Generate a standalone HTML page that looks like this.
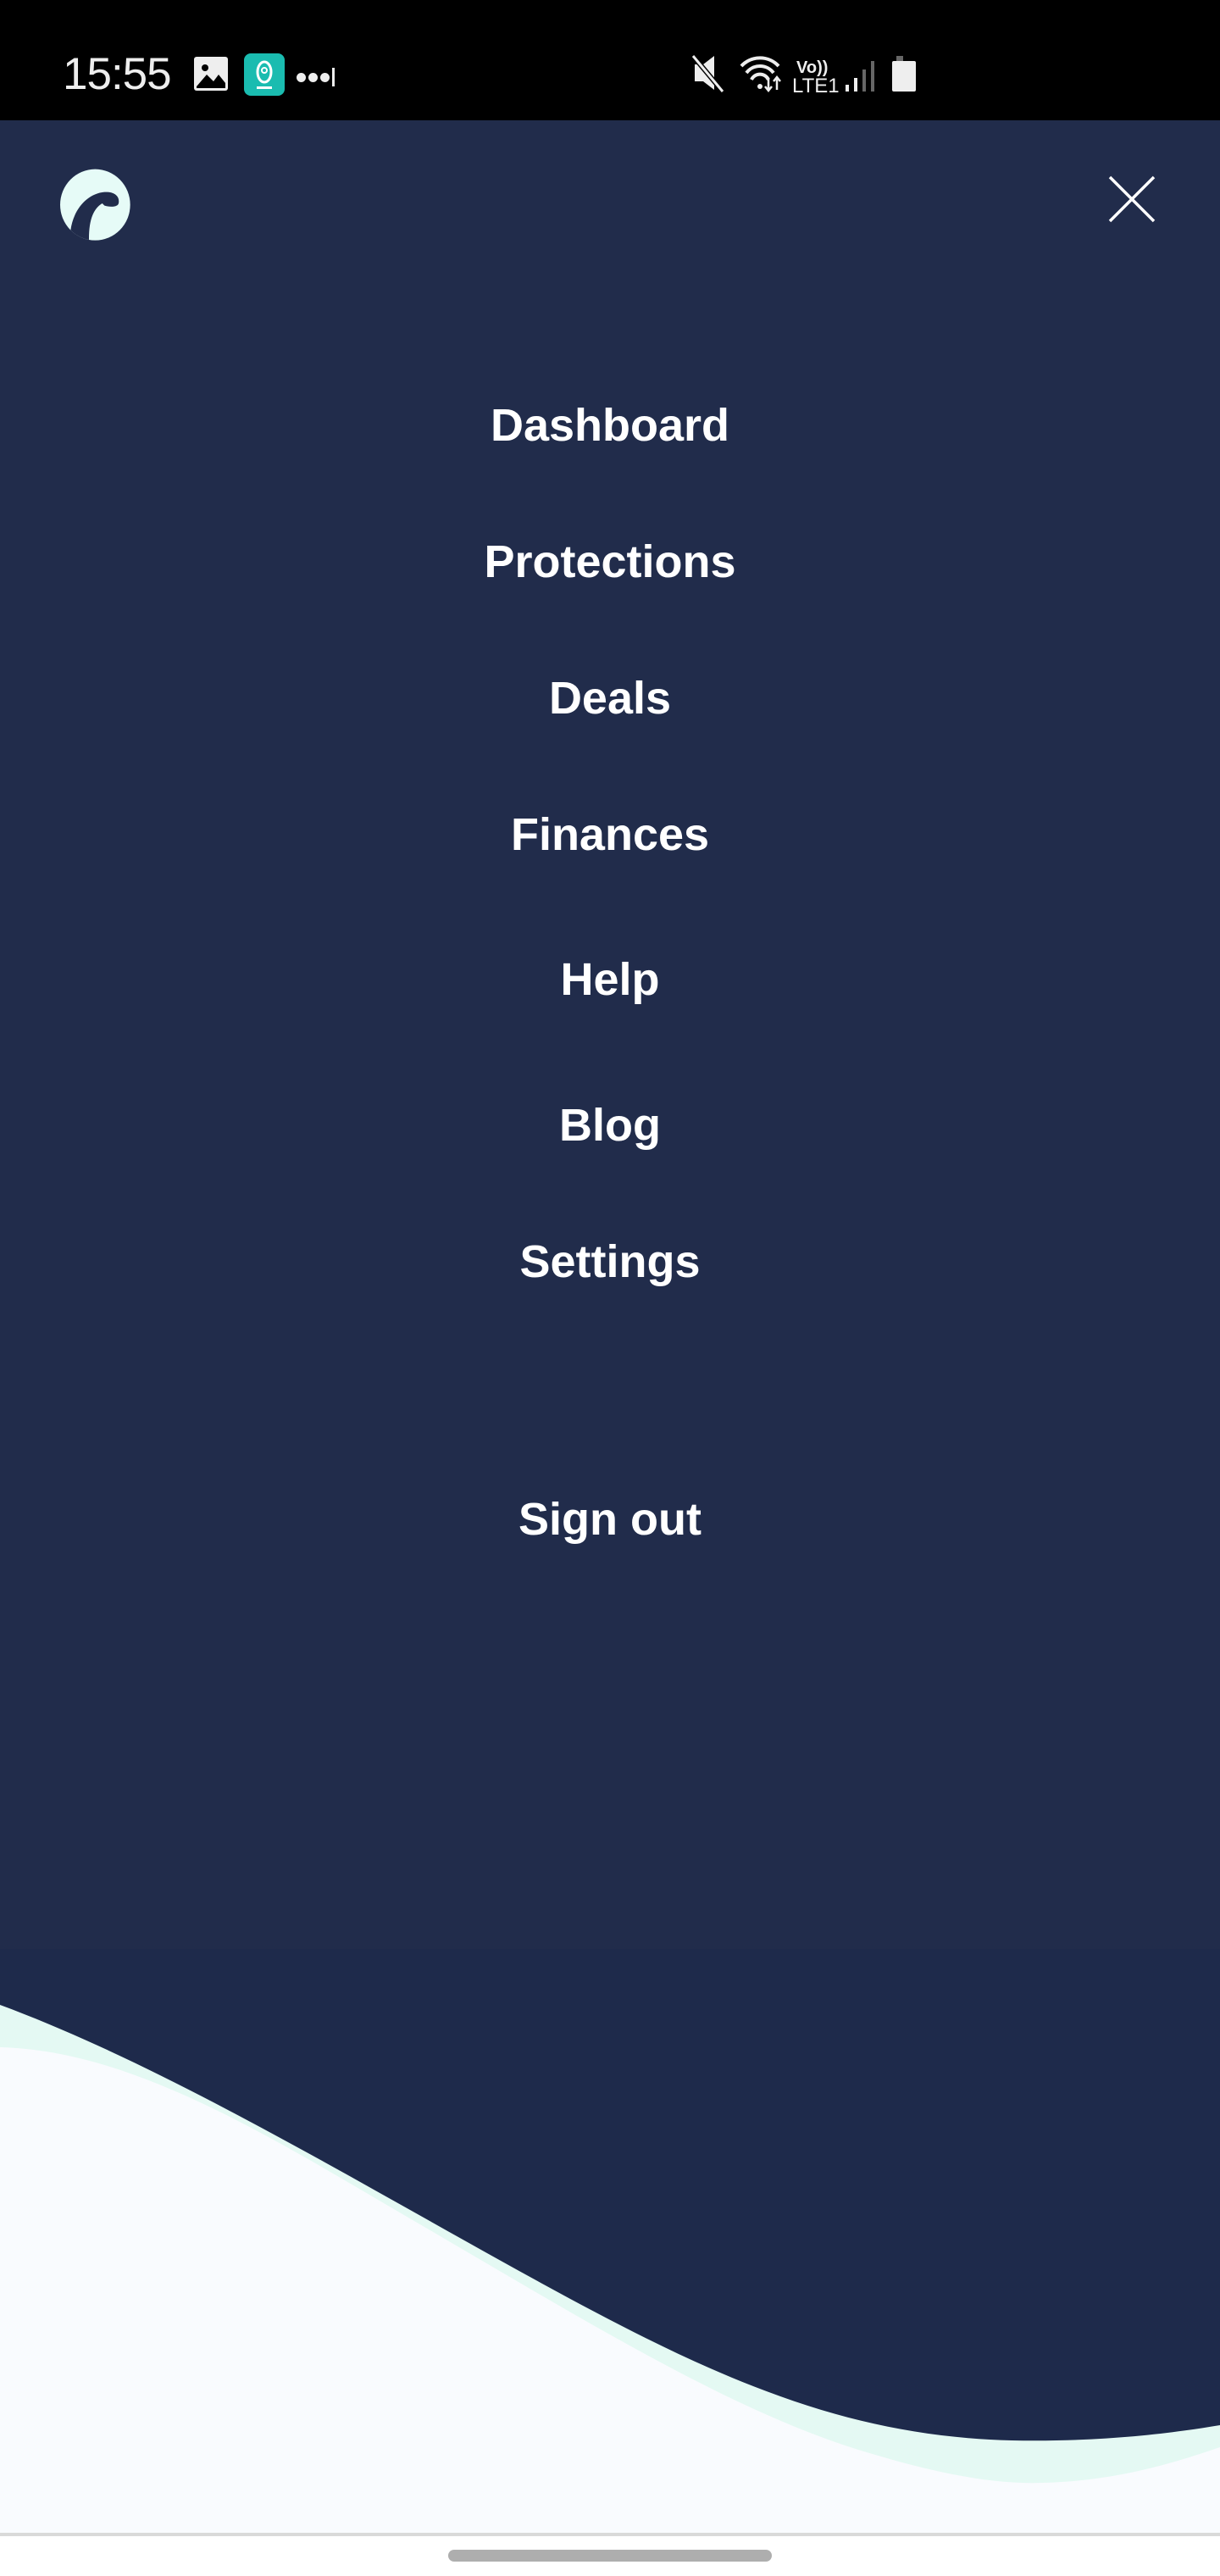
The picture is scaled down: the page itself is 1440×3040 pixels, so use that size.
<!DOCTYPE html>
<html><head><meta charset="utf-8"><style>
*{margin:0;padding:0;box-sizing:border-box}
body{width:1440px;height:3040px;overflow:hidden;background:#f9fbfe;font-family:"Liberation Sans",sans-serif;position:relative}
.sb{position:absolute;left:0;top:0;width:1440px;height:142px;background:#000}
.nav{position:absolute;left:0;top:142px;width:1440px;height:2850px;background:linear-gradient(#212c4b 0,#212c4b 2150px,#1e2a4b 2250px)}
.item{position:absolute;left:0;width:1440px;text-align:center;color:#fff;font-weight:bold;font-size:54px;line-height:60px}
</style></head><body>
<div class="sb">
<div style="position:absolute;left:74px;top:58px;color:#eee;font-size:53px;line-height:60px;letter-spacing:-1px">15:55</div>
<svg style="position:absolute;left:228px;top:66px" width="42" height="42" viewBox="0 0 42 42"><rect x="1" y="1" width="40" height="40" rx="3" fill="#eee"/><circle cx="14" cy="14" r="4" fill="#000"/><path d="M4 36 L16 22 L24 30 L30 22 L38 32 L38 38 L4 38Z" fill="#000"/></svg>
<svg style="position:absolute;left:288px;top:63px" width="48" height="50" viewBox="0 0 48 50"><rect width="48" height="50" rx="8" fill="#1abcb0"/><ellipse cx="24" cy="22" rx="8" ry="12" fill="none" stroke="#fff" stroke-width="3"/><circle cx="24" cy="20" r="3" fill="none" stroke="#fff" stroke-width="2"/><rect x="15" y="39" width="18" height="3" fill="#fff"/></svg>
<div style="position:absolute;left:350px;top:80px"><span style="display:inline-block;width:11px;height:11px;border-radius:50%;background:#eee;margin-right:3px"></span><span style="display:inline-block;width:11px;height:11px;border-radius:50%;background:#eee;margin-right:3px"></span><span style="display:inline-block;width:11px;height:11px;border-radius:50%;background:#eee;margin-right:3px"></span><span style="display:inline-block;width:3px;height:22px;background:#eee;vertical-align:-5px"></span></div>
<svg style="position:absolute;left:815px;top:62px" width="270" height="48" viewBox="0 0 270 48">
<path d="M5 14 H15 L28 4 V44 L15 34 H5Z" fill="#eee"/><line x1="3" y1="4" x2="38" y2="46" stroke="#000" stroke-width="6"/><line x1="3" y1="4" x2="38" y2="46" stroke="#eee" stroke-width="3"/>
<path d="M60 16 A30 30 0 0 1 104 16" fill="none" stroke="#eee" stroke-width="4"/><path d="M66 24 A20 20 0 0 1 98 24" fill="none" stroke="#eee" stroke-width="4"/><path d="M72 32 A11 11 0 0 1 92 32" fill="none" stroke="#eee" stroke-width="4"/><circle cx="82" cy="40" r="3" fill="#eee"/>
<path d="M92 30 V44 M88 40 L92 45 L96 40 M102 44 V30 M98 34 L102 29 L106 34" stroke="#eee" stroke-width="2.5" fill="none"/>
<text x="125" y="24" fill="#eee" font-size="20" font-weight="bold" font-family="Liberation Sans">Vo))</text>
<text x="120" y="47" fill="#eee" font-size="24" font-family="Liberation Sans">LTE1</text>
<rect x="183" y="38" width="4" height="8" fill="#eee"/><rect x="193" y="30" width="4" height="16" fill="#eee"/><rect x="203" y="20" width="4" height="26" fill="#666"/><rect x="213" y="10" width="4" height="36" fill="#666"/>
<rect x="243" y="4" width="8" height="6" fill="#666"/><rect x="238" y="10" width="28" height="36" rx="2" fill="#eee"/>
</svg>
</div>
<div class="nav"></div>
<svg style="position:absolute;left:60px;top:190px" width="110" height="100" viewBox="0 0 330 300">
<defs><clipPath id="c"><ellipse cx="157" cy="155" rx="124" ry="126"/></clipPath></defs>
<ellipse cx="157" cy="155" rx="124" ry="126" fill="#e6fbf7"/>
<path clip-path="url(#c)" d="M70 245 C80 170 130 115 190 110 C225 108 245 125 240 150 C237 162 215 165 190 158 L182 150 C152 168 135 205 135 275 L135 300 L70 300 Z" fill="#212c4b"/>
</svg>
<svg style="position:absolute;left:1305px;top:205px" width="62" height="60" viewBox="0 0 62 60"><path d="M5 4 L57 56 M57 4 L5 56" stroke="#fff" stroke-width="3.5" fill="none"/></svg>
<div class="item" style="top:472px">Dashboard</div>
<div class="item" style="top:633px">Protections</div>
<div class="item" style="top:794px">Deals</div>
<div class="item" style="top:955px">Finances</div>
<div class="item" style="top:1126px">Help</div>
<div class="item" style="top:1298px">Blog</div>
<div class="item" style="top:1459px">Settings</div>
<div class="item" style="top:1763px">Sign out</div>
<svg style="position:absolute;left:0;top:2300px" width="1440" height="740" viewBox="0 2300 1440 740">
<rect x="0" y="2300" width="1440" height="690" fill="#e4f9f3"/>
<path d="M0 2416 C150 2420 300 2510 470 2610 C660 2720 850 2840 1010 2890 C1100 2918 1170 2932 1230 2930 C1320 2928 1390 2905 1440 2888 L1440 2990 L0 2990Z" fill="#f9fbfe"/>
<path d="M0 2300 L1440 2300 L1440 2862 C1380 2872 1300 2882 1194 2880 C1000 2875 850 2810 640 2695 C430 2580 200 2440 0 2366 Z" fill="#1e2a4b"/>
<rect x="0" y="2989" width="1440" height="4" fill="#d9d9d9"/>
<rect x="0" y="2993" width="1440" height="47" fill="#fff"/>
<rect x="529" y="3009" width="382" height="14" rx="7" fill="#aeaeae"/>
</svg>
</body></html>
